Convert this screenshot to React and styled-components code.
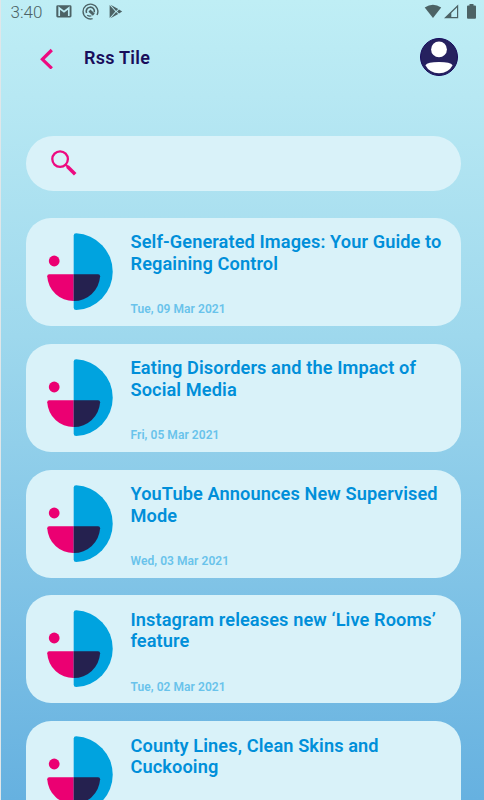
import React, { useState } from "react";
import styled, { createGlobalStyle } from "styled-components";

const articles = [
    { title: "Self-Generated Images: Your Guide to Regaining Control", date: "Tue, 09 Mar 2021" },
    { title: "Eating Disorders and the Impact of Social Media", date: "Fri, 05 Mar 2021" },
    { title: "YouTube Announces New Supervised Mode", date: "Wed, 03 Mar 2021" },
    { title: "Instagram releases new ‘Live Rooms’ feature", date: "Tue, 02 Mar 2021" },
    { title: "County Lines, Clean Skins and Cuckooing" },
];

const Logo = () => (
    <svg width="66" height="78" viewBox="0 0 66 78">
        <path d="M26.7 2.5Q26.7 .2 29.2 .2A38.5 38.5 0 0 1 29.2 77.1Q26.7 77.1 26.7 74.8Z" fill="#00a3df" />
        <path d="M26.7 41.3V68A26.4 26.4 0 0 1 .2 43.3Q.2 41.3 2.2 41.3Z" fill="#eb0072" />
        <path d="M26.7 41.3H51.1Q53.1 41.3 53.1 43.3A26.4 26.4 0 0 1 26.7 68Z" fill="#25214f" />
        <circle cx="7.2" cy="28" r="5.4" fill="#eb0072" />
    </svg>
);

const StatusBar = () => (
    <Status>
        <Time>3:40</Time>
        <Notifications>
            <svg width="16" height="13" viewBox="0 0 16 13">
                <rect x=".3" y=".3" width="15.2" height="12.2" rx="1.4" fill="#4c6265" />
                <path d="M3.2 11V3L8 6.6 12.8 3V11" fill="none" stroke="#bdecf4" strokeWidth="1.7" />
            </svg>
            <svg width="17" height="17" viewBox="0 0 17 17" fill="none" stroke="#4c6265">
                <path d="M10.6 15.6A7.4 7.4 0 1 1 15 12" strokeWidth="1.4" />
                <path d="M4.6 10A4.1 4.1 0 1 1 12.3 9.2" strokeWidth="1.6" />
                <path d="M7.4 7.6L11.8 11.6" strokeWidth="2.8" />
                <path d="M5.2 12.2Q7.4 13.6 9.4 12.8" strokeWidth="1.2" />
            </svg>
            <svg width="14" height="15" viewBox="0 0 14 15" fill="#4c6265">
                <path d="M.6 1V14L6.3 7.5Z" />
                <path d="M1.6 .8L9.2 5.1 7.1 7ZM1.6 14.2L9.2 9.9 7.1 8Z" />
                <path d="M10 5.6L13.2 7.5 10 9.4 8 7.5Z" />
            </svg>
        </Notifications>
        <svg width="52" height="16" viewBox="0 0 52 16" fill="#4c6265">
            <path d="M.7 3.6Q8.9-2.3 17.2 3.6L9 14Z" />
            <path fillRule="evenodd" d="M20 14.2L34.2 .4V14.2ZM27.3 9V12.9H33V3.5Z" />
            <path d="M45.5 0H49.5V1.4H51Q52 1.4 52 2.4V13.8Q52 14.8 51 14.8H44Q43 14.8 43 13.8V2.4Q43 1.4 44 1.4H45.5Z" />
        </svg>
    </Status>
);

export default function App() {
    const [search, setSearch] = useState("");
    return (
        <>
            <GlobalStyle />
            <Screen>
                <StatusBar />
                <Header>
                    <IconButton aria-label="Back">
                        <svg width="14" height="24" viewBox="0 0 14 24">
                            <path d="M11.8 5L2.4 14.3 11.8 23.4" fill="none" stroke="#ed0a80" strokeWidth="3.2" />
                        </svg>
                    </IconButton>
                    <h1>Rss Tile</h1>
                    <IconButton aria-label="Profile">
                        <svg width="38" height="38" viewBox="0 0 38 38">
                            <circle cx="19" cy="19" r="18.5" fill="#26215f" stroke="#150b5c" />
                            <circle cx="19" cy="11.4" r="7.9" fill="#fff" />
                            <path d="M5.4 27.3Q7.5 24 19 24T32.6 27.3Q28.4 35.2 19 35.2T5.4 27.3Z" fill="#fff" />
                        </svg>
                    </IconButton>
                </Header>
                <SearchBar>
                    <svg width="26" height="26" viewBox="0 0 26 26" fill="none" stroke="#ed0a80">
                        <circle cx="9.1" cy="9.1" r="7.8" strokeWidth="2.3" />
                        <path d="M14.8 14.8L17 17" strokeWidth="2.2" />
                        <path d="M16.4 16.4L24.2 24.2" strokeWidth="3.6" />
                    </svg>
                    <input
                        type="text"
                        aria-label="Search"
                        value={search}
                        onChange={(e) => setSearch(e.target.value)}
                    />
                </SearchBar>
                <List>
                    {articles.map((article) => (
                        <Card key={article.title}>
                            <Logo />
                            <CardText>
                                <h2>{article.title}</h2>
                                {article.date && <time>{article.date}</time>}
                            </CardText>
                        </Card>
                    ))}
                </List>
            </Screen>
        </>
    );
}

const GlobalStyle = createGlobalStyle`
    * {
        box-sizing: border-box;
    }
    body {
        margin: 0;
        overflow: hidden;
        font-family: Roboto, sans-serif;
    }
`;

const Screen = styled.div`
    display: flex;
    flex-direction: column;
    height: 100vh;
    overflow: hidden;
    border-left: 1.5px solid #dfe6e9;
    background: linear-gradient(180deg, #bfeef5 0%, #b7e8f3 12%, #9ed8ed 42%, #66b1e0 100%);
`;

const Status = styled.div`
    display: flex;
    align-items: center;
    flex: none;
    height: 23px;
    padding: 0 8px 0 9.5px;
`;

const Time = styled.span`
    width: 45.5px;
    font-size: 17px;
    font-weight: 350;
    color: #4c6265;
`;

const Notifications = styled.div`
    display: flex;
    align-items: center;
    gap: 10px;
    flex: 1;
`;

const Header = styled.header`
    display: flex;
    align-items: center;
    flex: none;
    height: 67px;
    padding: 0 26px 0 39px;
    h1 {
        flex: 1;
        margin: 1px 0 0 30px;
        font-size: 18px;
        font-weight: 600;
        letter-spacing: 0.25px;
        color: #180d5b;
    }
`;

const IconButton = styled.button`
    display: flex;
    padding: 0;
    border: none;
    background: none;
    cursor: pointer;
`;

const SearchBar = styled.label`
    display: flex;
    align-items: center;
    flex: none;
    height: 55px;
    margin: 45.5px 23.5px 27.5px 25px;
    padding: 0 25px 1px;
    border-radius: 28px;
    background: #d9f2f9;
    input {
        flex: 1;
        padding: 0 14px;
        font-size: 18px;
        color: #008fd9;
        border: none;
        outline: none;
        background: none;
    }
`;

const List = styled.main`
    display: flex;
    flex-direction: column;
    gap: 17.8px;
    padding: 0 23.5px 0 25px;
`;

const Card = styled.article`
    display: flex;
    flex: none;
    height: 108px;
    padding: 15px 12px 9px 21px;
    border-radius: 25px;
    background: #d9f2f9;
    svg {
        flex: none;
    }
`;

const CardText = styled.div`
    display: flex;
    flex-direction: column;
    justify-content: space-between;
    margin: -1.7px 0 -0.3px 17.5px;
    h2 {
        margin: 0;
        font-size: 18.2px;
        font-weight: 600;
        line-height: 21.6px;
        letter-spacing: 0.1px;
        color: #008fd9;
    }
    time {
        font-size: 12px;
        font-weight: 600;
        line-height: 16px;
        letter-spacing: 0.06px;
        color: #69c3eb;
    }
`;
